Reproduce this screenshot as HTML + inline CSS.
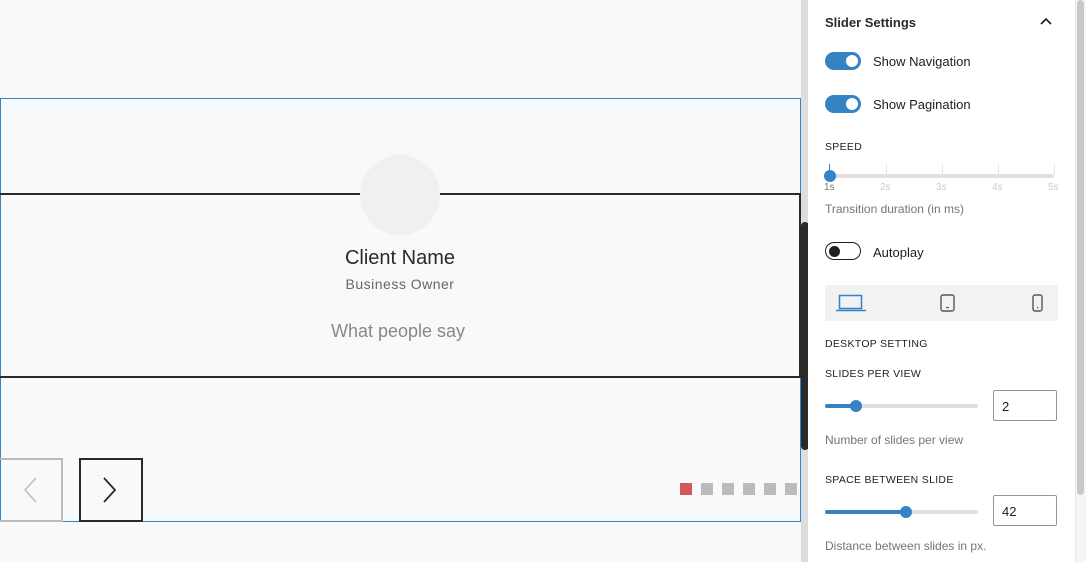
<!DOCTYPE html>
<html><head><style>
*{box-sizing:border-box;margin:0;padding:0}
body{width:1086px;height:562px;overflow:hidden;background:#f8f9fb;font-family:"Liberation Sans",sans-serif;position:relative}
.a{position:absolute}
.tog{position:absolute;left:825px;width:36px;height:18px;border-radius:9px;background:#3582c4}
.tog::after{content:"";position:absolute;right:3px;top:3px;width:12px;height:12px;border-radius:50%;background:#fff}
.lbl{position:absolute;left:873px;font-size:13px;color:#1e1e1e}
.cap{position:absolute;left:825px;font-size:10.5px;color:#1e1e1e;letter-spacing:.3px}
.help{position:absolute;left:825px;font-size:12px;color:#757575}
.inp{position:absolute;left:993px;width:64px;height:31px;border:1px solid #949494;border-radius:2px;font-size:13px;padding:8px 0 0 8px;color:#1e1e1e;background:#fff}
.dot{position:absolute;top:483px;width:12px;height:12px;background:#bbb}
</style></head><body>
<div class="a" style="left:0;top:98px;width:801px;height:424px;border:1px solid #3582c4"></div>
<div class="a" style="left:0;top:193px;width:801px;height:185px;border:2px solid #2a2a2a;border-left:none"></div>
<div class="a" style="left:360px;top:155px;width:80px;height:80px;border-radius:50%;background:#f0f0f0"></div>
<div class="a" style="left:0;width:800px;top:247px;text-align:center;font-size:20px;color:#2a2a2a">Client Name</div>
<div class="a" style="left:0;width:800px;top:276px;text-align:center;font-size:14px;color:#666;letter-spacing:.5px">Business Owner</div>
<div class="a" style="left:0;width:796px;top:321px;text-align:center;font-size:18px;color:#888">What people say</div>
<div class="a" style="left:0;top:458px;width:63px;height:64px;border:2px solid #bbb;border-left:none"></div>
<svg class="a" style="left:22px;top:476px" width="16" height="28"><path d="M14 2L3 14L14 26" fill="none" stroke="#bbb" stroke-width="1.5"/></svg>
<div class="a" style="left:79px;top:458px;width:64px;height:64px;border:2px solid #2a2a2a"></div>
<svg class="a" style="left:102px;top:476px" width="16" height="28"><path d="M2 2L13 14L2 26" fill="none" stroke="#2a2a2a" stroke-width="1.8"/></svg>
<div class="dot" style="left:680px;background:#d05a5a"></div>
<div class="dot" style="left:701px"></div><div class="dot" style="left:722px"></div><div class="dot" style="left:743px"></div><div class="dot" style="left:764px"></div><div class="dot" style="left:785px"></div>
<div class="a" style="left:801px;top:0;width:7px;height:562px;background:#ddd"></div>
<div class="a" style="left:801px;top:222px;width:8px;height:228px;border-radius:4px;background:#2a2a2a"></div>
<div class="a" style="left:808px;top:0;width:267px;height:562px;background:#fff"></div>
<div class="a" style="left:1075px;top:0;width:11px;height:562px;background:#f5f5f5;border-left:1px solid #e6e6e6"></div>
<div class="a" style="left:1077px;top:0;width:7px;height:495px;border-radius:4px;background:#c8c8c8"></div>
<div class="a" style="left:825px;top:15px;font-size:13px;font-weight:bold;color:#2a2a2a">Slider Settings</div>
<svg class="a" style="left:1039px;top:16px" width="14" height="10"><path d="M2 8L7 3L12 8" fill="none" stroke="#1e1e1e" stroke-width="1.6"/></svg>
<div class="tog" style="top:52px"></div><div class="lbl" style="top:54px">Show Navigation</div>
<div class="tog" style="top:95px"></div><div class="lbl" style="top:97px">Show Pagination</div>
<div class="cap" style="top:141px">SPEED</div>
<div class="a" style="left:829px;top:174px;width:225px;height:4px;background:#e0e0e0;border-radius:2px"></div>
<div class="a" style="left:829px;top:164px;width:1px;height:10px;background:#3582c4"></div>
<div class="a" style="left:886px;top:164px;width:1px;height:10px;background:#e4e4e4"></div>
<div class="a" style="left:942px;top:164px;width:1px;height:10px;background:#e4e4e4"></div>
<div class="a" style="left:998px;top:164px;width:1px;height:10px;background:#e4e4e4"></div>
<div class="a" style="left:1054px;top:164px;width:1px;height:10px;background:#e4e4e4"></div>
<div class="a" style="left:824px;top:170px;width:12px;height:12px;border-radius:50%;background:#3582c4"></div>
<div class="a" style="left:824px;top:182px;font-size:10px;color:#757575">1s</div>
<div class="a" style="left:880px;top:182px;font-size:10px;color:#ccc">2s</div>
<div class="a" style="left:936px;top:182px;font-size:10px;color:#ccc">3s</div>
<div class="a" style="left:992px;top:182px;font-size:10px;color:#ccc">4s</div>
<div class="a" style="left:1048px;top:182px;font-size:10px;color:#ccc">5s</div>
<div class="help" style="top:202px">Transition duration (in ms)</div>
<div class="a" style="left:825px;top:242px;width:36px;height:18px;border-radius:9px;border:1.5px solid #1e1e1e"></div>
<div class="a" style="left:829px;top:245.5px;width:11px;height:11px;border-radius:50%;background:#1e1e1e"></div>
<div class="lbl" style="top:245px">Autoplay</div>
<div class="a" style="left:825px;top:285px;width:233px;height:36px;background:#f2f2f2"></div>
<svg class="a" style="left:836px;top:293px" width="30" height="20"><rect x="3.5" y="2.5" width="22" height="13" fill="none" stroke="#3582c4" stroke-width="1.5"/><path d="M0 17.5H30" stroke="#3582c4" stroke-width="1.5"/></svg>
<svg class="a" style="left:940px;top:294px" width="16" height="18"><rect x="1" y="1" width="13" height="16" rx="2" fill="none" stroke="#555" stroke-width="1.4"/><path d="M6 13.5H9" stroke="#555" stroke-width="1.2"/></svg>
<svg class="a" style="left:1032px;top:294px" width="12" height="18"><rect x="1" y="1" width="9" height="16" rx="2" fill="none" stroke="#555" stroke-width="1.4"/><path d="M5 13.5H6" stroke="#555" stroke-width="1.4"/></svg>
<div class="cap" style="top:338px">DESKTOP SETTING</div>
<div class="cap" style="top:368px">SLIDES PER VIEW</div>
<div class="a" style="left:825px;top:404px;width:153px;height:4px;background:#e0e0e0;border-radius:2px"></div>
<div class="a" style="left:825px;top:404px;width:31px;height:4px;background:#3582c4;border-radius:2px"></div>
<div class="a" style="left:850px;top:400px;width:12px;height:12px;border-radius:50%;background:#3582c4"></div>
<div class="inp" style="top:390px">2</div>
<div class="help" style="top:433px">Number of slides per view</div>
<div class="cap" style="top:474px">SPACE BETWEEN SLIDE</div>
<div class="a" style="left:825px;top:510px;width:153px;height:4px;background:#e0e0e0;border-radius:2px"></div>
<div class="a" style="left:825px;top:510px;width:81px;height:4px;background:#3582c4;border-radius:2px"></div>
<div class="a" style="left:900px;top:506px;width:12px;height:12px;border-radius:50%;background:#3582c4"></div>
<div class="inp" style="top:495px">42</div>
<div class="help" style="top:539px">Distance between slides in px.</div>
</body></html>
